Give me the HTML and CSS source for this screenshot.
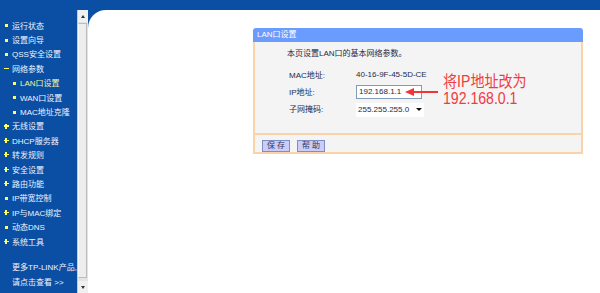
FILE: index.html
```html
<!DOCTYPE html>
<html lang="zh-CN">
<head>
    <meta charset="UTF-8">
    <title>LAN口设置</title>
    <link rel="stylesheet" href="styles.css">
</head>
<body>
    <div class="topbar"></div>
    <div class="frame">
        <nav class="menu">
            <div class="item"><span class="mark dot"></span>运行状态</div>
            <div class="item"><span class="mark dot"></span>设置向导</div>
            <div class="item"><span class="mark dot"></span>QSS安全设置</div>
            <div class="item"><span class="mark minus"></span>网络参数</div>
            <div class="item sub active"><span class="mark dot"></span>LAN口设置</div>
            <div class="item sub"><span class="mark dot"></span>WAN口设置</div>
            <div class="item sub"><span class="mark dot"></span>MAC地址克隆</div>
            <div class="item"><span class="mark plus"></span>无线设置</div>
            <div class="item"><span class="mark plus"></span>DHCP服务器</div>
            <div class="item"><span class="mark plus"></span>转发规则</div>
            <div class="item"><span class="mark plus"></span>安全设置</div>
            <div class="item"><span class="mark plus"></span>路由功能</div>
            <div class="item"><span class="mark dot"></span>IP带宽控制</div>
            <div class="item"><span class="mark plus"></span>IP与MAC绑定</div>
            <div class="item"><span class="mark dot"></span>动态DNS</div>
            <div class="item"><span class="mark plus"></span>系统工具</div>
            <div class="more">
                <div>更多TP-LINK产品,</div>
                <div>请点击查看 &gt;&gt;</div>
            </div>
        </nav>

        <div class="scroll">
            <div class="sb-btn"><span class="tri up"></span></div>
            <div class="sb-thumb"></div>
            <div class="sb-btn"><span class="tri down"></span></div>
        </div>

        <main class="content">
            <section class="panel">
                <div class="panel-head">LAN口设置</div>
                <div class="panel-body">
                    <p class="intro">本页设置LAN口的基本网络参数。</p>
                    <div class="form-area">
                        <div class="fields">
                            <div class="row">
                                <span class="label">MAC地址:</span>
                                <span class="value">40-16-9F-45-5D-CE</span>
                            </div>
                            <div class="row">
                                <span class="label">IP地址:</span>
                                <span class="value">
                                    <input class="ip-input" type="text" value="192.168.1.1">
                                    <svg class="arrow" width="34" height="10" viewBox="0 0 34 10">
                                        <line x1="6" y1="5" x2="33" y2="5" stroke="#f0343a" stroke-width="2"/>
                                        <polygon points="0,5 9,1 9,9" fill="#f0343a"/>
                                    </svg>
                                </span>
                            </div>
                            <div class="row">
                                <span class="label">子网掩码:</span>
                                <span class="value">
                                    <span class="select">255.255.255.0<span class="caret"></span></span>
                                </span>
                            </div>
                        </div>
                        <div class="note">
                            <div>将IP地址改为</div>
                            <div>192.168.0.1</div>
                        </div>
                    </div>
                </div>
                <div class="panel-foot">
                    <button class="btn">保 存</button>
                    <button class="btn">帮 助</button>
                </div>
            </section>
        </main>
    </div>
</body>
</html>
```

FILE: styles.css
```css
body {
    margin: 0;
    background-color: #0a4fa3;
    font-family: "Liberation Sans", "Noto Sans CJK SC", sans-serif;
    font-size: 8px;
    height: 293px;
    overflow: hidden;
}
.topbar {
    height: 10px;
}
.frame {
    display: flex;
    height: 283px;
}
.menu {
    width: 77px;
    padding-top: 8px;
    color: #eef3ff;
    box-sizing: border-box;
}
.item {
    display: flex;
    align-items: center;
    height: 14.4px;
    padding-left: 3px;
    white-space: nowrap;
}
.item.sub {
    padding-left: 11px;
}
.item.active {
    color: #f4f4a0;
}
.mark {
    position: relative;
    width: 6px;
    height: 6px;
    margin-right: 3px;
    flex-shrink: 0;
}
.mark.dot::before {
    content: "";
    position: absolute;
    left: 2px;
    top: 2px;
    width: 3px;
    height: 3px;
    background-color: #ffff66;
}
.mark.plus::before,
.mark.minus::before {
    content: "";
    position: absolute;
    left: 0.5px;
    top: 2.5px;
    width: 5px;
    height: 1.2px;
    background-color: #ffff66;
}
.mark.plus::after {
    content: "";
    position: absolute;
    left: 2.4px;
    top: 0.6px;
    width: 1.2px;
    height: 5px;
    background-color: #ffff66;
}
.more {
    margin-top: 13px;
    padding-left: 12px;
    line-height: 14.4px;
    white-space: nowrap;
}
.scroll {
    width: 11px;
    display: flex;
    flex-direction: column;
    background-color: #e4e4e4;
    border-left: 1px solid #c9c9c9;
    box-sizing: border-box;
}
.sb-btn {
    height: 12px;
    display: flex;
    align-items: center;
    justify-content: center;
    background-color: #f0f0f0;
}
.sb-thumb {
    flex: 1;
    margin: 1px 1px 3px 0;
    background-color: #ededed;
    border: 1px solid #bcbcbc;
    border-left-color: #f8f8f8;
}
.tri {
    width: 0;
    height: 0;
    border-left: 2.5px solid transparent;
    border-right: 2.5px solid transparent;
}
.tri.up {
    border-bottom: 3px solid #333;
}
.tri.down {
    border-top: 3px solid #333;
}
.content {
    flex: 1;
    background-color: #ffffff;
    border-top-left-radius: 18px;
}
.panel {
    width: 330px;
    margin: 18px 0 0 165px;
}
.panel-head {
    height: 14px;
    line-height: 14px;
    padding-left: 4px;
    background-color: #6a9bff;
    color: #ffffff;
    border-radius: 3px 3px 0 0;
}
.panel-body {
    height: 93px;
    background-color: #f4f4f4;
    border-left: 2px solid #fbd3a8;
    border-right: 2px solid #fbd3a8;
    border-bottom: 2px solid #fbd3a8;
    box-sizing: border-box;
    color: #1c2a4a;
}
.intro {
    margin: 0 0 0 32px;
    padding-top: 6px;
    line-height: 12px;
}
.form-area {
    display: flex;
    margin-top: 6px;
    padding-left: 34px;
}
.fields {
    width: 154px;
}
.row {
    display: flex;
    align-items: center;
    height: 17px;
}
.label {
    width: 67px;
}
.value {
    position: relative;
    display: flex;
    align-items: center;
}
.ip-input {
    width: 66px;
    height: 14px;
    box-sizing: border-box;
    margin: 0;
    padding: 0 0 0 2px;
    border: 1px solid #7f9db9;
    background-color: #ffffff;
    font-family: inherit;
    font-size: 8px;
    color: #1c2a4a;
}
.arrow {
    position: absolute;
    left: 49px;
    top: 2px;
}
.select {
    display: flex;
    align-items: center;
    justify-content: space-between;
    width: 68px;
    height: 14px;
    padding: 0 2px;
    box-sizing: border-box;
    background-color: #ffffff;
    margin-top: 2px;
}
.caret {
    width: 0;
    height: 0;
    border-left: 3px solid transparent;
    border-right: 3px solid transparent;
    border-top: 3px solid #111;
}
.note {
    margin-top: 7px;
    font-size: 16px;
    line-height: 17px;
    color: #f23a40;
    white-space: nowrap;
    transform: scaleX(0.88);
    transform-origin: left top;
}
.panel-foot {
    display: flex;
    align-items: flex-end;
    gap: 7px;
    height: 17px;
    padding-left: 7px;
    background-color: #f4f4f4;
    border-left: 2px solid #fbd3a8;
    border-right: 2px solid #fbd3a8;
    border-bottom: 2px solid #fbd3a8;
}
.btn {
    width: 28px;
    height: 12px;
    padding: 0;
    font-family: inherit;
    font-size: 8px;
    line-height: 10px;
    color: #2e3a66;
    background-color: #ccccf8;
    border: 1px solid #7b8fc6;
}
```
